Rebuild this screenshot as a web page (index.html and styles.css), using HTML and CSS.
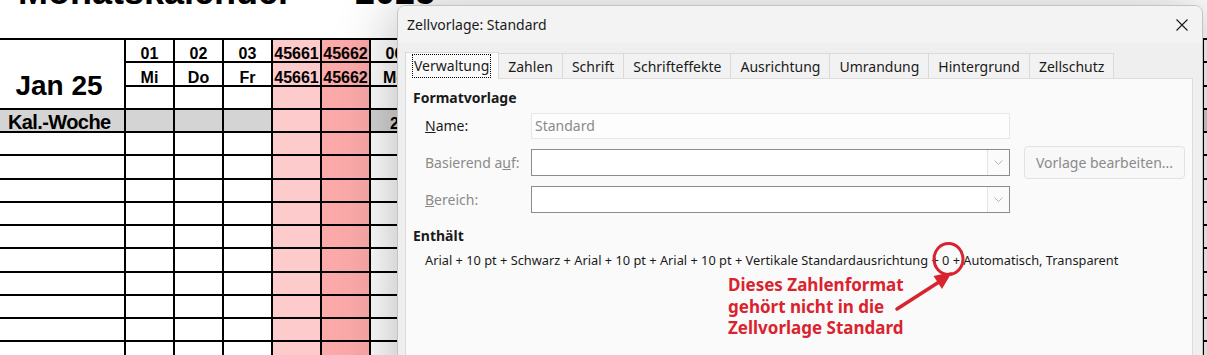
FILE: index.html
```html
<!DOCTYPE html>
<html>

<head>
  <meta charset="utf-8">
  <meta name="viewport" content="width=device-width, initial-scale=1.0">
  <link rel="stylesheet" href="styles.css">
</head>

<body>
  <div class="page">
    <div class="title">Monatskalender<span class="year">2025</span></div>
    <div class="sheet" id="sheet"></div>

    <div class="dialog">
      <div class="titlebar">
        <span>Zellvorlage: Standard</span>
        <svg class="close" width="12" height="12" viewBox="0 0 12 12">
          <path d="M0.5 0.5 L11.5 11.5 M11.5 0.5 L0.5 11.5" stroke="#1a1a1a" stroke-width="1.1" fill="none" />
        </svg>
      </div>
      <div class="dlg-body">
        <div class="tabs">
          <div class="tab active"><span class="focus">Verwaltung</span></div>
          <div class="tab">Zahlen</div>
          <div class="tab">Schrift</div>
          <div class="tab">Schrifteffekte</div>
          <div class="tab">Ausrichtung</div>
          <div class="tab">Umrandung</div>
          <div class="tab">Hintergrund</div>
          <div class="tab">Zellschutz</div>
        </div>
        <div class="panel">
          <h2>Formatvorlage</h2>
          <div class="form">
            <label><u>N</u>ame:</label>
            <div class="field">Standard</div>
            <div></div>
            <label class="off">Basierend a<u>u</u>f:</label>
            <div class="combo">
              <span class="drop"><svg width="9" height="5" viewBox="0 0 9 5"><path d="M0.5 0.5 L4.5 4.5 L8.5 0.5" stroke="#b4b4b4" fill="none" /></svg></span>
            </div>
            <button class="edit-btn">Vorla<u>g</u>e bearbeiten...</button>
            <label class="off"><u>B</u>ereich:</label>
            <div class="combo">
              <span class="drop"><svg width="9" height="5" viewBox="0 0 9 5"><path d="M0.5 0.5 L4.5 4.5 L8.5 0.5" stroke="#b4b4b4" fill="none" /></svg></span>
            </div>
          </div>
          <h2 class="contains-head">Enthält</h2>
          <p class="contains">Arial + 10 pt + Schwarz + Arial + 10 pt + Arial + 10 pt + Vertikale Standardausrichtung + 0 + Automatisch, Transparent</p>
        </div>
      </div>
    </div>

    <div class="note">Dieses Zahlenformat<br>gehört nicht in die<br>Zellvorlage Standard</div>
    <svg class="marks" width="1207" height="355" viewBox="0 0 1207 355">
      <ellipse cx="948.5" cy="259" rx="14.5" ry="15.5" stroke="#d9232e" stroke-width="3" fill="none" />
      <line x1="897" y1="309" x2="939" y2="282" stroke="#d9232e" stroke-width="3.5" stroke-linecap="round" />
      <polygon points="952,272 933.5,276 942,289" fill="#d9232e" />
    </svg>
  </div>

  <script>
    const names = ['Mo', 'Di', 'Mi', 'Do', 'Fr', 'Sa', 'So'];
    const sheet = document.getElementById('sheet');

    function cell(cls, text) {
      let div = document.createElement('div');
      div.className = 'c ' + cls;
      div.textContent = text || '';
      sheet.appendChild(div);
      return div;
    }

    for (let r = 0; r < 14; r++) {
      if (r === 0) {
        cell('month', 'Jan 25');
      } else if (r === 3) {
        cell('kw', 'Kal.-Woche');
      } else if (r > 3) {
        cell('', '');
      }
      for (let d = 1; d <= 24; d++) {
        let wd = (d + 1) % 7;
        let tone = wd === 5 ? 'sat' : wd === 6 ? 'sun' : '';
        let weekend = tone !== '';
        let dd = d < 10 ? '0' + d : '' + d;
        if (r === 0) {
          cell('head ' + tone, weekend ? 45657 + d : dd);
        } else if (r === 1) {
          cell('head ' + tone, weekend ? 45657 + d : names[wd]);
        } else if (r === 3) {
          cell('head ' + (tone || 'grey'), wd === 0 ? Math.floor((d + 2) / 7) + 1 : '');
        } else {
          cell(tone, '');
        }
      }
    }
  </script>
</body>

</html>
```

FILE: styles.css
```css
body {
  margin: 0;
  background: #fff;
  overflow: hidden;
  width: 1207px;
  height: 355px;
}

.page {
  position: relative;
  width: 1207px;
  height: 355px;
  overflow: hidden;
}

/* spreadsheet behind the dialog */
.title {
  font-family: "Liberation Sans", Arial, sans-serif;
  font-weight: bold;
  font-size: 36px;
  line-height: 36px;
  height: 36px;
  margin-top: -26px;
  margin-bottom: 28px;
  padding-left: 18px;
  white-space: nowrap;
}

.year {
  margin-left: 63px;
}

.sheet {
  display: grid;
  grid-template-columns: 124px repeat(24, 47px);
  grid-auto-rows: 21.25px;
  gap: 2px;
  padding-top: 2px;
  background: #000;
  width: max-content;
  font-family: "Liberation Sans", Arial, sans-serif;
  font-weight: bold;
}

.c {
  background: #fff;
  font-size: 16px;
  line-height: 15px;
  display: flex;
  align-items: flex-end;
  justify-content: center;
  white-space: nowrap;
  overflow: visible;
}

.month {
  grid-row: span 3;
  font-size: 28px;
  line-height: 28px;
  padding-bottom: 8px;
  padding-right: 6px;
}

.kw {
  background: #d4d4d4;
  font-size: 20px;
  line-height: 18px;
  letter-spacing: -0.6px;
  justify-content: flex-start;
  padding-left: 8px;
}

.grey {
  background: #d4d4d4;
}

.sat {
  background: #fdcbcb;
}

.sun {
  background: #fca9a9;
}

/* dialog window */
.dialog {
  position: absolute;
  left: 397px;
  top: 5px;
  width: 806px;
  height: 420px;
  box-sizing: border-box;
  border: 1px solid #c4c4c4;
  border-radius: 8px;
  background: #efefef;
  box-shadow: 0 6px 60px rgba(0, 0, 0, 0.3);
  font-family: "Noto Sans", sans-serif;
  font-size: 14px;
  color: #1a1a1a;
  overflow: hidden;
}

.titlebar {
  height: 37px;
  background: #f3f3f3;
  display: flex;
  align-items: center;
  justify-content: space-between;
  padding: 0 14px 0 9px;
}

.close {
  display: block;
}

.dlg-body {
  padding: 9px 9px 0 7px;
}

.tabs {
  display: flex;
  align-items: flex-end;
  height: 26px;
}

.tab {
  height: 25px;
  line-height: 25px;
  box-sizing: border-box;
  padding: 0 9px;
  border: 1px solid #dadada;
  border-bottom: none;
  margin-left: -1px;
  background: #f2f2f2;
  white-space: nowrap;
}

.tab.active {
  height: 27px;
  margin-left: 0;
  margin-bottom: -1px;
  padding: 0 8px 0 7px;
  background: #fafafa;
  position: relative;
  display: flex;
  align-items: center;
}

.focus {
  display: inline-block;
  line-height: 22px;
  padding: 0 1px;
  outline: 1px dotted #000;
}

.panel {
  background: #fafafa;
  border: 1px solid #dcdcdc;
  height: 300px;
  padding: 9px 0 0 7px;
}

h2 {
  font-size: 14px;
  line-height: 20px;
  margin: 0;
  font-weight: bold;
}

.form {
  display: grid;
  grid-template-columns: 92px 479px 161px;
  column-gap: 14px;
  row-gap: 7px;
  align-items: center;
  margin: 5px 0 0 12px;
}

.form label {
  line-height: 20px;
  white-space: nowrap;
}

.off {
  color: #8a8a8a;
}

.field {
  height: 26px;
  box-sizing: border-box;
  border: 1px solid #e6e6e6;
  background: #fdfdfd;
  color: #8a8a8a;
  line-height: 24px;
  padding-left: 3px;
}

.combo {
  height: 27px;
  box-sizing: border-box;
  border: 1px solid #8c8c8c;
  background: #fff;
  display: flex;
  justify-content: flex-end;
}

.drop {
  width: 21px;
  border-left: 1px solid #e4e4e4;
  background: #fbfbfb;
  display: flex;
  align-items: center;
  justify-content: center;
}

.edit-btn {
  height: 33px;
  box-sizing: border-box;
  border: 1px solid #e2e2e2;
  border-radius: 4px;
  background: #f8f8f8;
  color: #8a8a8a;
  font-family: "Noto Sans", sans-serif;
  font-size: 14px;
  padding: 0;
}

.contains-head {
  margin-top: 13px;
}

.contains {
  margin: 4px 0 0 12px;
  font-size: 12.8px;
  line-height: 20px;
  white-space: nowrap;
}

/* red annotation on top */
.note {
  position: absolute;
  left: 728px;
  top: 274px;
  font-family: "Noto Sans", sans-serif;
  font-weight: bold;
  font-size: 17px;
  line-height: 21.5px;
  color: #d9232e;
}

.marks {
  position: absolute;
  left: 0;
  top: 0;
}
```
